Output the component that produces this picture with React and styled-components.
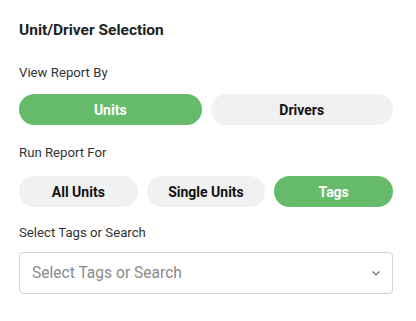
import React, { useState } from "react";
import styled, { createGlobalStyle } from "styled-components";

const GlobalStyle = createGlobalStyle`
  body {
    margin: 0;
    background: #ffffff;
    font-family: Roboto, "Liberation Sans", sans-serif;
  }
`;

const Panel = styled.div`
  padding: 20px 23px 0 19px;
  width: 374px;
`;

const Title = styled.div`
  font-size: 15.5px;
  line-height: 20px;
  font-weight: 700;
  color: #222222;
  margin-bottom: 24px;
`;

const Label = styled.div`
  font-size: 13.2px;
  line-height: 18px;
  color: #333333;
  margin-bottom: ${(p) => p.$gap}px;
`;

const ButtonRow = styled.div`
  display: grid;
  grid-template-columns: repeat(${(p) => p.$cols}, 1fr);
  gap: 9px;
  margin-bottom: ${(p) => p.$gap}px;
`;

const Toggle = styled.button`
  height: 31px;
  border: none;
  border-radius: 16px;
  font-family: inherit;
  font-size: 14px;
  font-weight: 700;
  cursor: pointer;
  background: ${(p) => (p.$active ? "#66bb6a" : "#f1f1f1")};
  color: ${(p) => (p.$active ? "#ffffff" : "#111111")};
`;

const Select = styled.div`
  height: 42px;
  box-sizing: border-box;
  border: 1px solid #d3d3d3;
  border-radius: 4px;
  display: flex;
  align-items: center;
  justify-content: space-between;
  padding: 0 11px 0 12px;
`;

const Placeholder = styled.span`
  font-size: 15.6px;
  color: #8a8a8a;
`;

const Chevron = () => (
  <svg width="10" height="10" viewBox="0 0 10 10">
    <path d="M1.5 3.5 L5 6.8 L8.5 3.5" fill="none" stroke="#6d7a8a" strokeWidth="1.4" />
  </svg>
);

export default function App() {
  const [viewBy, setViewBy] = useState("Units");
  const [runFor, setRunFor] = useState("Tags");

  return (
    <>
      <GlobalStyle />
      <Panel>
        <Title>Unit/Driver Selection</Title>
        <Label $gap={12}>View Report By</Label>
        <ButtonRow $cols={2} $gap={19}>
          {["Units", "Drivers"].map((v) => (
            <Toggle key={v} $active={viewBy === v} onClick={() => setViewBy(v)}>
              {v}
            </Toggle>
          ))}
        </ButtonRow>
        <Label $gap={14}>Run Report For</Label>
        <ButtonRow $cols={3} $gap={17}>
          {["All Units", "Single Units", "Tags"].map((v) => (
            <Toggle key={v} $active={runFor === v} onClick={() => setRunFor(v)}>
              {v}
            </Toggle>
          ))}
        </ButtonRow>
        <Label $gap={10}>Select Tags or Search</Label>
        <Select>
          <Placeholder>Select Tags or Search</Placeholder>
          <Chevron />
        </Select>
      </Panel>
    </>
  );
}
